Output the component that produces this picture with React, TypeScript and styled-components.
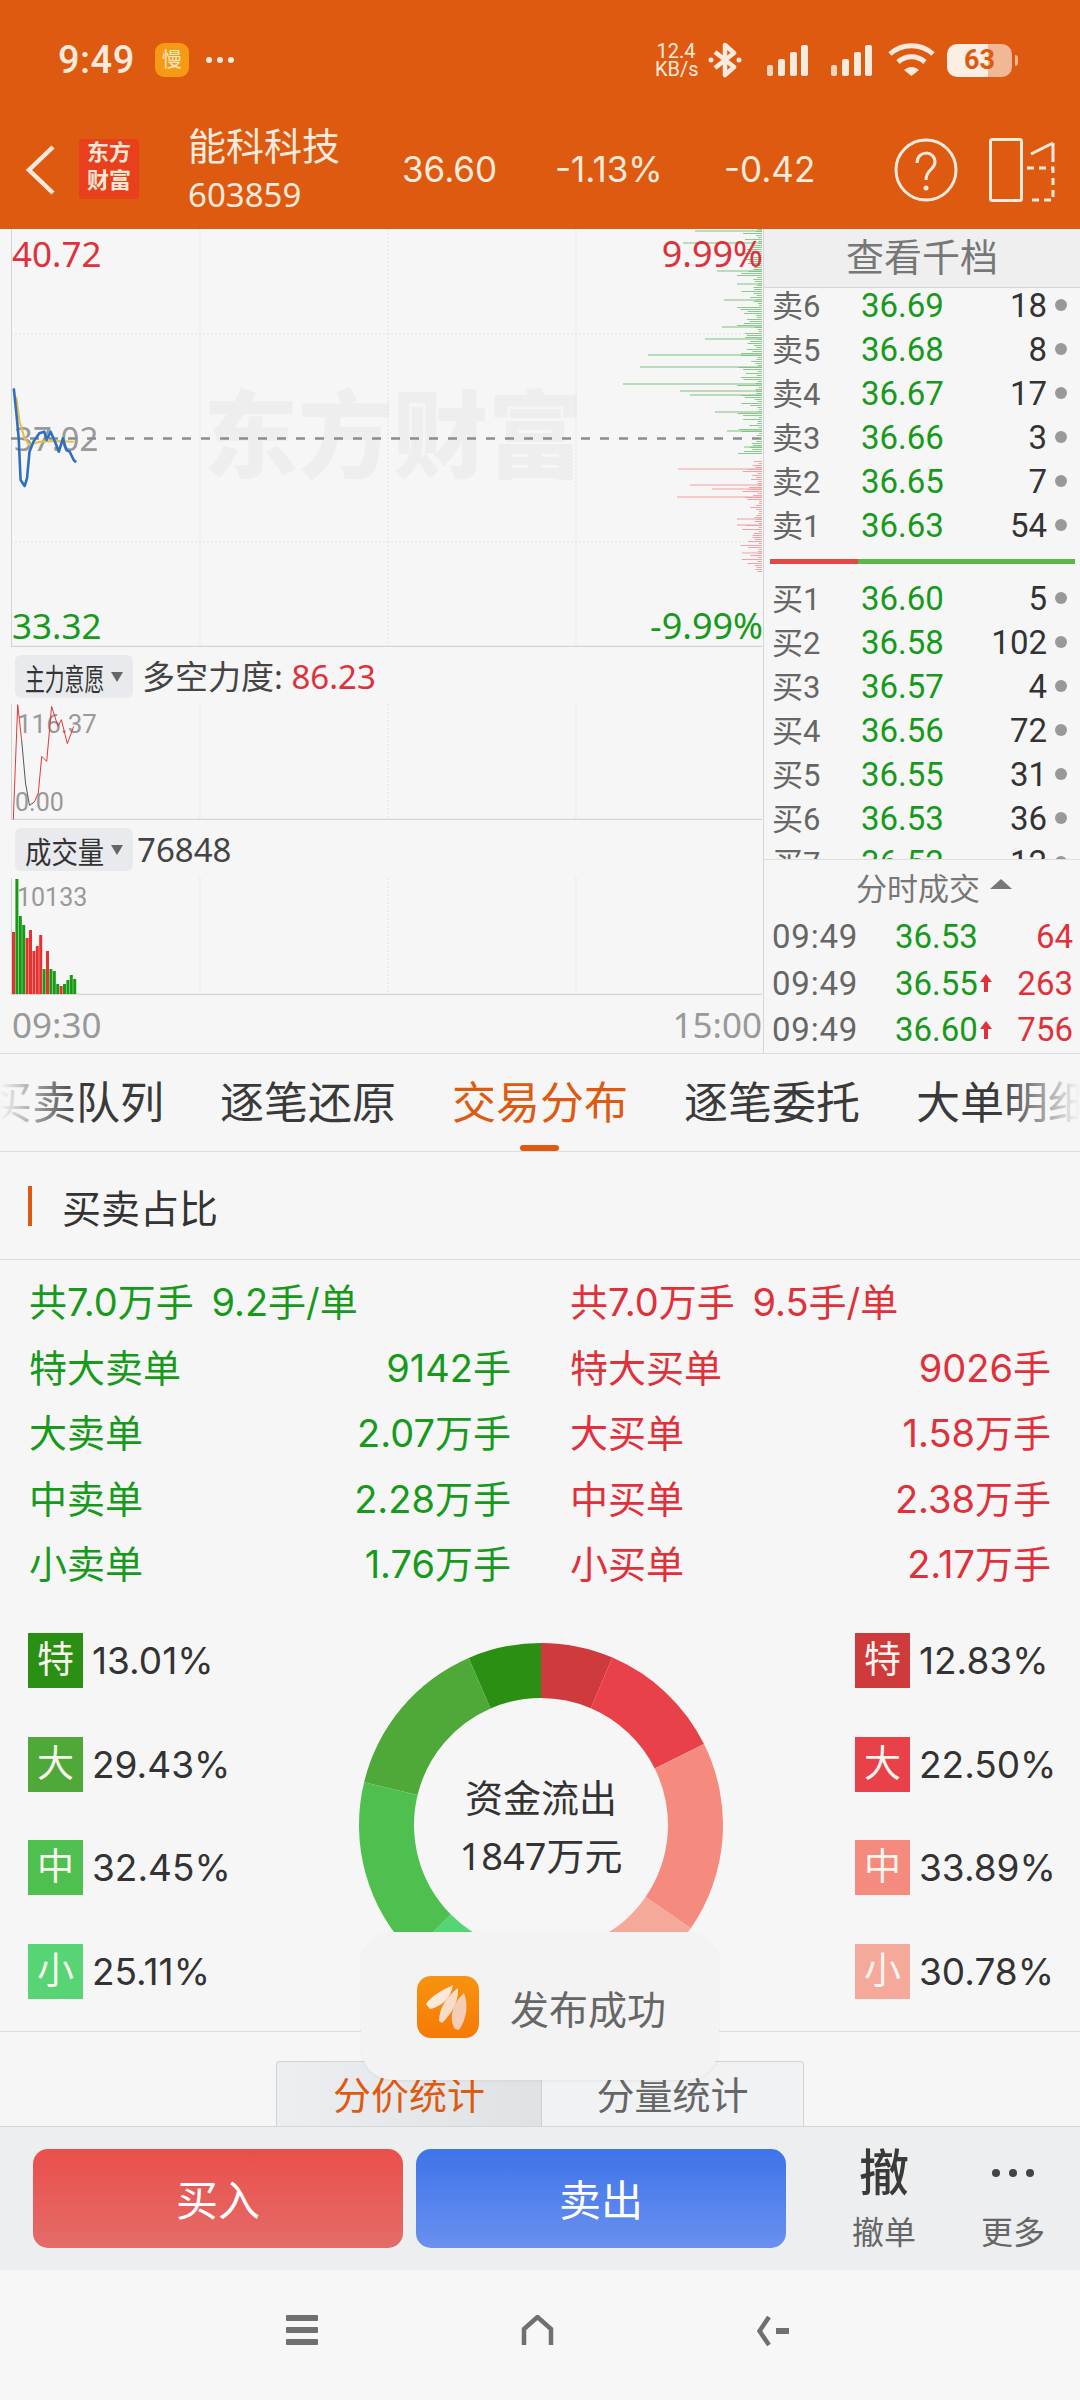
import React from 'react';
import styled, { createGlobalStyle } from 'styled-components';

const ORANGE = '#de5a10';
const HEAD_TEXT = '#f8ebdd';
const UP = '#e0303a';
const DOWN = '#179a1c';
const NOTO = '"Noto Sans", "Noto Sans CJK SC", sans-serif';
const INTER = 'Inter, "Noto Sans CJK SC", sans-serif';

const GlobalStyle = createGlobalStyle`
    html, body {
        margin: 0;
        padding: 0;
        background: #f6f6f6;
    }
    * {
        box-sizing: border-box;
    }
`;

const Page = styled.div`
    position: relative;
    width: 1080px;
    height: 2400px;
    overflow: hidden;
    display: flex;
    flex-direction: column;
    background: #f6f6f6;
    font-family: Roboto, "Noto Sans CJK SC", sans-serif;
    color: #333;
`;

/* ---------- orange header ---------- */

const Header = styled.header`
    height: 229px;
    flex: none;
    background: ${ORANGE};
    color: ${HEAD_TEXT};
`;

const StatusBar = styled.div`
    height: 110px;
    padding: 26px 68px 0 58px;
    display: flex;
    align-items: flex-start;
`;

const Clock = styled.span`
    font-size: 38px;
    line-height: 68px;
    font-weight: 500;
    letter-spacing: 0.5px;
`;

const SlowBadge = styled.span`
    width: 34px;
    height: 34px;
    margin: 17px 0 0 20px;
    border-radius: 9px;
    background: #f59a12;
    color: #fde7c8;
    font-size: 20px;
    line-height: 34px;
    text-align: center;
`;

const StatusDots = styled.span`
    display: flex;
    gap: 5px;
    margin: 31px 0 0 17px;
    i {
        width: 6px;
        height: 6px;
        border-radius: 50%;
        background: ${HEAD_TEXT};
    }
`;

const StatusRight = styled.div`
    margin-left: auto;
    margin-top: 17px;
    display: flex;
    align-items: center;
    height: 34px;
`;

const NetSpeed = styled.span`
    width: 42px;
    font-size: 20px;
    line-height: 18px;
    text-align: center;
    margin-right: 11px;
`;

const Battery = styled.span`
    position: relative;
    width: 65px;
    height: 33px;
    margin-left: 12px;
    border-radius: 10px;
    background: linear-gradient(90deg, #fbeee3 0 63%, #f0b895 63% 100%);
    color: ${ORANGE};
    font-size: 27px;
    font-weight: 700;
    line-height: 33px;
    text-align: center;
    &::after {
        content: '';
        position: absolute;
        right: -6px;
        top: 11px;
        width: 3px;
        height: 11px;
        border-radius: 0 3px 3px 0;
        background: #f0b895;
    }
`;

const NavBar = styled.div`
    height: 119px;
    padding-left: 25px;
    display: flex;
    align-items: center;
`;

const LogoTile = styled.div`
    width: 60px;
    height: 60px;
    margin: -2px 0 0 24px;
    border-radius: 3px;
    background: #e8401c;
    color: #fbe6d6;
    font-size: 22px;
    font-weight: 700;
    line-height: 28px;
    text-align: center;
`;

const StockName = styled.div`
    width: 214px;
    margin-left: 49px;
    b {
        display: block;
        font-size: 38px;
        font-weight: 400;
        line-height: 50px;
    }
    span {
        display: block;
        font-family: ${NOTO};
        font-size: 33px;
        line-height: 46px;
    }
`;

const Quote = styled.span<{ $width: number }>`
    width: ${(p) => p.$width}px;
    font-family: ${INTER};
    font-size: 35px;
    margin-top: -1px;
`;

const NavIcons = styled.div`
    margin-left: auto;
    padding-right: 25px;
    display: flex;
    align-items: center;
    gap: 31px;
`;

/* ---------- chart area ---------- */

const ChartRow = styled.section`
    height: 825px;
    flex: none;
    display: flex;
    border-bottom: 1px solid #dcdcdc;
`;

const Charts = styled.div`
    width: 763px;
    flex: none;
    padding-left: 11px;
    display: flex;
    flex-direction: column;
`;

const ChartBox = styled.div<{ $height: number }>`
    position: relative;
    height: ${(p) => p.$height}px;
    flex: none;
    svg {
        position: relative;
        display: block;
    }
`;

const AxisLabel = styled.span<{ $color: string; $size: number; $top: number; $right?: boolean; $left?: number }>`
    position: absolute;
    top: ${(p) => p.$top}px;
    ${(p) => (p.$right ? 'right: 0;' : `left: ${p.$left ?? 1}px;`)}
    color: ${(p) => p.$color};
    font-family: ${NOTO};
    font-size: ${(p) => p.$size}px;
    line-height: 40px;
`;

const SmallLabel = styled(AxisLabel)`
    font-family: Roboto, sans-serif;
`;

const Watermark = styled.span`
    position: absolute;
    left: 192px;
    top: 155px;
    font-size: 95px;
    line-height: 110px;
    font-weight: 900;
    color: #eeeeee;
    white-space: nowrap;
`;

const IndicatorBar = styled.div<{ $height: number }>`
    height: ${(p) => p.$height}px;
    flex: none;
    padding: 8px 0 0 4px;
    display: flex;
    align-items: flex-start;
    font-family: ${NOTO};
    font-size: 33px;
    color: #444;
`;

const IndicatorPill = styled.span<{ $gap: number }>`
    width: 118px;
    height: 43px;
    padding-left: 10px;
    margin-right: ${(p) => p.$gap}px;
    display: flex;
    align-items: center;
    justify-content: space-between;
    background: #e9eaed;
    border-radius: 6px;
    color: #333;
`;

const PillLabel = styled.span<{ $scale: number }>`
    display: block;
    width: 79px;
    flex: none;
    font-size: 30px;
    white-space: nowrap;
    transform: scaleX(${(p) => p.$scale});
    transform-origin: left center;
`;

const PillArrow = styled.i`
    width: 0;
    height: 0;
    margin: 0 10px 0 0;
    border: 6px solid transparent;
    border-top: 10px solid #666;
    border-bottom: 0;
`;

const IndicatorText = styled.span`
    line-height: 43px;
    white-space: nowrap;
    em {
        font-style: normal;
        color: ${UP};
    }
`;

const TimeAxis = styled.div`
    flex: 1;
    display: flex;
    align-items: center;
    justify-content: space-between;
    padding: 0 1px;
    font-family: ${NOTO};
    font-size: 35px;
    color: #999;
`;

const SidePanel = styled.aside`
    flex: 1;
    min-width: 0;
    border-left: 1px solid #d6d6d6;
    display: flex;
    flex-direction: column;
`;

const DepthHeader = styled.div`
    height: 59px;
    flex: none;
    background: #efefef;
    border-bottom: 1px solid #d4d4d4;
    font-size: 38px;
    line-height: 58px;
    text-align: center;
    color: #777;
`;

const DepthList = styled.div`
    height: 572px;
    flex: none;
    overflow: hidden;
    border-bottom: 1px solid #dedede;
`;

const DepthScroll = styled.div`
    margin-top: -5px;
`;

const DepthLine = styled.div`
    height: 44px;
    padding: 0 13px 0 8px;
    display: flex;
    align-items: center;
    font-size: 33px;
`;

const DepthLabel = styled.span`
    width: 89px;
    flex: none;
    margin-top: -3px;
    color: #666;
    font-size: 31px;
    white-space: nowrap;
`;

const DepthPrice = styled.span`
    width: 90px;
    flex: none;
    color: ${DOWN};
`;

const DepthVolume = styled.span`
    flex: 1;
    text-align: right;
    color: #333;
`;

const DepthDot = styled.i`
    width: 12px;
    height: 12px;
    margin-left: 8px;
    flex: none;
    border-radius: 50%;
    background: #999;
`;

const RatioBarWrap = styled.div`
    height: 29px;
    padding: 0 5px 0 6px;
    display: flex;
    align-items: center;
`;

const RatioBar = styled.div`
    width: 100%;
    height: 5px;
    background: linear-gradient(90deg, #e2474a 0 29%, #5cb648 29% 100%);
`;

const TradeHeader = styled.div`
    height: 53px;
    flex: none;
    display: flex;
    align-items: center;
    justify-content: center;
    gap: 10px;
    padding-left: 24px;
    font-size: 31px;
    color: #777;
`;

const TradeCaret = styled.i`
    width: 0;
    height: 0;
    margin-top: -6px;
    border: 11px solid transparent;
    border-bottom: 10px solid #777;
    border-top: 0;
`;

const TradeLine = styled.div`
    height: 47px;
    padding: 0 7px 0 8px;
    display: flex;
    align-items: center;
    font-size: 33px;
`;

const TradeTime = styled.span`
    width: 123px;
    flex: none;
    color: #666;
    letter-spacing: 0.8px;
`;

const TradePrice = styled.span`
    width: 108px;
    flex: none;
    color: ${DOWN};
    display: flex;
    align-items: center;
    gap: 1px;
    white-space: nowrap;
`;

const TradeVolume = styled.span`
    flex: 1;
    text-align: right;
    color: ${UP};
`;

/* ---------- tabs ---------- */

const TabStrip = styled.nav`
    position: relative;
    height: 98px;
    flex: none;
    overflow: hidden;
    border-bottom: 1px solid #dcdcdc;
    display: flex;
    gap: 60px;
`;

const Tab = styled.span<{ $active?: boolean; $first?: boolean }>`
    position: relative;
    flex: none;
    width: 172px;
    margin-left: ${(p) => (p.$first ? '-12px' : '0')};
    font-size: 44px;
    line-height: 101px;
    white-space: nowrap;
    color: ${(p) => (p.$active ? ORANGE : '#3a3a3a')};
    &::after {
        content: ${(p) => (p.$active ? "''" : 'none')};
        position: absolute;
        left: 68px;
        bottom: 0;
        width: 39px;
        height: 6px;
        border-radius: 3px;
        background: ${ORANGE};
    }
`;

const TabFade = styled.i<{ $side: 'left' | 'right' }>`
    position: absolute;
    top: 0;
    bottom: 0;
    width: 80px;
    ${(p) => p.$side}: 0;
    background: linear-gradient(to ${(p) => p.$side}, rgba(246, 246, 246, 0), #f6f6f6);
`;

const SectionTitle = styled.h2`
    height: 108px;
    flex: none;
    margin: 0;
    display: flex;
    align-items: center;
    padding-left: 28px;
    border-bottom: 1px solid #dcdcdc;
    font-size: 39px;
    font-weight: 400;
    color: #333;
    &::before {
        content: '';
        width: 4px;
        height: 40px;
        margin-right: 30px;
        background: ${ORANGE};
    }
`;

/* ---------- buy / sell summary ---------- */

const Summary = styled.section`
    height: 337px;
    flex: none;
    padding: 7px 29px 0 29px;
    display: grid;
    grid-template-columns: 482px 481px;
    column-gap: 59px;
`;

const SummaryColumn = styled.div<{ $color: string }>`
    color: ${(p) => p.$color};
    font-family: ${INTER};
    font-size: 38px;
    word-spacing: 7px;
`;

const SummaryLine = styled.div`
    height: 65.5px;
    display: flex;
    align-items: center;
    justify-content: space-between;
    white-space: nowrap;
`;

const RatioBlock = styled.section`
    height: 435px;
    flex: none;
    padding-top: 36px;
    border-bottom: 1px solid #dcdcdc;
    display: grid;
    grid-template-columns: 359px 364px 1fr;
`;

const Legend = styled.div<{ $left: number }>`
    padding-left: ${(p) => p.$left}px;
    display: flex;
    flex-direction: column;
    gap: 48.5px;
`;

const LegendItem = styled.div`
    height: 55px;
    display: flex;
    align-items: center;
    gap: 9px;
    font-family: ${INTER};
    font-size: 37px;
    color: #333;
    white-space: nowrap;
`;

const LegendTag = styled.span<{ $bg: string }>`
    width: 55px;
    height: 55px;
    background: ${(p) => p.$bg};
    color: #f8f4ee;
    font-size: 37px;
    line-height: 54px;
    text-align: center;
`;

const Donut = styled.div`
    position: relative;
    height: 364px;
    margin-top: 10px;
`;

const DonutCaption = styled.div`
    position: absolute;
    left: 0;
    right: 0;
    top: 125px;
    text-align: center;
    font-family: ${NOTO};
    font-size: 38px;
    line-height: 58px;
    color: #333;
`;

const Segments = styled.div`
    height: 94px;
    flex: none;
    padding-top: 29px;
    display: flex;
    justify-content: center;
`;

const Segment = styled.span<{ $active?: boolean }>`
    width: ${(p) => (p.$active ? 265 : 263)}px;
    height: 65px;
    border: 1px solid #cfd2d6;
    border-bottom: 0;
    border-radius: ${(p) => (p.$active ? '4px 0 0 0' : '0 4px 0 0')};
    ${(p) => (p.$active ? 'border-right: 0;' : '')}
    background: ${(p) => (p.$active ? 'linear-gradient(90deg, #eceef1, #dfe2e5)' : '#f1f2f3')};
    color: ${(p) => (p.$active ? ORANGE : '#666')};
    font-size: 38px;
    line-height: 68px;
    text-align: center;
`;

/* ---------- trade bar and navigation ---------- */

const TradeBar = styled.footer`
    height: 144px;
    flex: none;
    padding: 22px 0 0 33px;
    display: flex;
    align-items: flex-start;
    border-top: 1px solid #d4d6d9;
    background: #eceef0;
`;

const OrderButton = styled.button<{ $from: string; $to: string }>`
    width: 370px;
    height: 99px;
    margin-right: 13px;
    padding: 0 0 2px;
    border: none;
    border-radius: 15px;
    outline: none;
    background: linear-gradient(${(p) => p.$from}, ${(p) => p.$to});
    color: #fff;
    font-family: inherit;
    font-size: 42px;
    cursor: pointer;
`;

const BarAction = styled.div<{ $width: number; $left: number }>`
    width: ${(p) => p.$width}px;
    margin-left: ${(p) => p.$left}px;
    text-align: center;
    color: #666;
    font-size: 32px;
    b {
        display: block;
        height: 62px;
        color: #3a3a3a;
        font-size: 50px;
        font-weight: 500;
        line-height: 50px;
    }
    span {
        display: block;
        line-height: 44px;
        white-space: nowrap;
    }
`;

const MoreDots = styled.i`
    display: flex;
    height: 62px;
    align-items: center;
    justify-content: center;
    gap: 9px;
    padding-bottom: 14px;
    i {
        width: 8px;
        height: 8px;
        border-radius: 50%;
        background: #444;
    }
`;

const SystemNav = styled.div`
    flex: 1;
    padding: 45px 0 0 286px;
    display: flex;
    align-items: flex-start;
    gap: 203px;
    background: #f7f7f7;
`;

/* ---------- floating notice ---------- */

const Toast = styled.div`
    position: absolute;
    left: 361px;
    top: 1932px;
    width: 358px;
    height: 148px;
    padding: 2px 0 0 56px;
    display: flex;
    align-items: center;
    gap: 31px;
    border-radius: 32px;
    background: #f3f3f3;
    box-shadow: 0 1px 3px rgba(0, 0, 0, 0.06);
    color: #666;
    font-size: 39px;
`;

/* ---------- chart data ---------- */

const GRID_X = [189, 377, 565];

const GridLines = ({ rows, height }: { rows: number[]; height: number }) => (
    <g fill="none" strokeWidth="1">
        {GRID_X.map((x) => <line key={x} x1={x} x2={x} y1={0} y2={height} stroke="#e3e3e3" strokeDasharray="2 2" />)}
        {rows.map((y) => <line key={y} x1={0} x2={751} y1={y} y2={y} stroke="#e3e3e3" strokeDasharray="2 2" />)}
        <line x1={0.5} x2={0.5} y1={0} y2={height} stroke="#d4d4d4" />
        <line x1={0} x2={751} y1={height - 0.5} y2={height - 0.5} stroke="#d4d4d4" strokeWidth="1.5" />
    </g>
);

const toPoints = (pts: number[][], ox: number, oy: number) =>
    pts.map(([x, y]) => `${(x / 2.036 - ox).toFixed(1)},${(y / 3 + oy).toFixed(1)}`).join(' ');

const BLUE_LINE = [[28, 490], [33, 560], [38, 640], [42, 765], [50, 783], [55, 760], [60, 680], [68, 650], [80, 625], [90, 620], [95, 645], [103, 620], [112, 650], [120, 680], [128, 640], [135, 675], [142, 680], [150, 705], [155, 712]];
const YELLOW_LINE = [[33, 515], [40, 590], [50, 640], [60, 660], [80, 650], [110, 648], [150, 650]];

// long order-book bars on the right edge, given as [y, left x] on the chart
const LONG_ASK = [[2, 684], [14, 672], [42, 706], [55, 726], [71, 713], [98, 711], [110, 694], [126, 637], [138, 629], [155, 612], [162, 669], [166, 679], [183, 704], [202, 716], [218, 733]];
const LONG_BID = [[240, 667], [256, 679], [260, 701], [268, 666], [290, 726], [296, 726], [324, 731]];

const noise = (count: number, seed: number) => {
    let s = seed;
    return Array.from({ length: count }, () => {
        s = (s * 16807) % 2147483647;
        return s % 1000 / 1000;
    });
};

const ShortBars = ({ from, to, color, reach }: { from: number; to: number; color: string; reach: number }) => {
    const rows = Math.floor((to - from) / 2);
    const values = noise(rows, from + 97);
    return (
        <g stroke={color} strokeWidth="1">
            {values.map((v, i) => (
                <line key={i} x1={751 - 3 - v * v * reach} x2={751} y1={from + i * 2 + 0.5} y2={from + i * 2 + 0.5} />
            ))}
        </g>
    );
};

const PriceChart = () => (
    <ChartBox $height={418}>
        <Watermark>东方财富</Watermark>
        <AxisLabel $color={UP} $size={35} $top={5} $left={1}>40.72</AxisLabel>
        <AxisLabel $color={DOWN} $size={35} $top={377} $left={1}>33.32</AxisLabel>
        <AxisLabel $color="#999" $size={33} $top={190} $left={3}>37.02</AxisLabel>
        <svg width="751" height="418">
            <GridLines rows={[105, 313]} height={418} />
            <line x1={0} x2={751} y1={209.5} y2={209.5} stroke="#8c8c8c" strokeWidth="2.4" strokeDasharray="9 10" />
            <ShortBars from={0} to={226} color="#8ac98b" reach={22} />
            <ShortBars from={232} to={345} color="#f0a3a3" reach={20} />
            {LONG_ASK.map(([y, x]) => <line key={y} x1={x} x2={751} y1={y} y2={y} stroke="#7cc27e" strokeWidth="1" />)}
            {LONG_BID.map(([y, x]) => <line key={y} x1={x} x2={751} y1={y} y2={y} stroke="#f0a0a0" strokeWidth="1" />)}
            <polyline points={toPoints(YELLOW_LINE, 11, -4)} fill="none" stroke="#e8bd4c" strokeWidth="2" />
            <polyline points={toPoints(BLUE_LINE, 11, -4)} fill="none" stroke="#2f6fc0" strokeWidth="2.6" strokeLinejoin="round" />
        </svg>
        <AxisLabel $color={UP} $size={36} $top={5} $right>9.99%</AxisLabel>
        <AxisLabel $color={DOWN} $size={36} $top={377} $right>-9.99%</AxisLabel>
    </ChartBox>
);

const FORCE_RED = [[27, 540], [36, 195], [44, 300]];
const FORCE_BLACK = [[44, 300], [52, 430], [60, 497], [70, 487]];
const FORCE_RED_2 = [[70, 487], [78, 460], [85, 350], [95, 365], [105, 200], [118, 260], [125, 240], [137, 312], [150, 260]];

const ForceChart = () => (
    <ChartBox $height={116}>
        <SmallLabel $color="#999" $size={26} $top={0} $left={6}>116.37</SmallLabel>
        <SmallLabel $color="#999" $size={25} $top={79} $left={4}>0.00</SmallLabel>
        <svg width="751" height="116">
            <GridLines rows={[]} height={116} />
            <polyline points={toPoints(FORCE_RED, 11, -64.3)} fill="none" stroke="#e23a3a" strokeWidth="1" />
            <polyline points={toPoints(FORCE_BLACK, 11, -64.3)} fill="none" stroke="#555" strokeWidth="1" />
            <polyline points={toPoints(FORCE_RED_2, 11, -64.3)} fill="none" stroke="#e23a3a" strokeWidth="1" />
        </svg>
    </ChartBox>
);

// [bar height, is red]
const VOLUME_BARS: [number, boolean][] = [
    [62, true], [115, false], [78, false], [69, false], [56, true], [64, true], [43, true], [48, true], [59, true],
    [25, false], [43, true], [25, false], [23, false], [10, false], [8, true], [10, false], [14, false], [19, false], [15, false],
];

const VolumeChart = () => (
    <ChartBox $height={117}>
        <SmallLabel $color="#999" $size={25} $top={0} $left={6}>10133</SmallLabel>
        <svg width="751" height="117">
            <GridLines rows={[]} height={117} />
            {VOLUME_BARS.map(([h, red], i) => (
                <rect key={i} x={1 + i * 3.4} y={116 - h} width={3} height={h} fill={red ? '#e8302e' : '#159a14'} />
            ))}
        </svg>
    </ChartBox>
);

const ASKS = [
    ['卖6', '36.69', '18'], ['卖5', '36.68', '8'], ['卖4', '36.67', '17'],
    ['卖3', '36.66', '3'], ['卖2', '36.65', '7'], ['卖1', '36.63', '54'],
];
const BIDS = [
    ['买1', '36.60', '5'], ['买2', '36.58', '102'], ['买3', '36.57', '4'], ['买4', '36.56', '72'],
    ['买5', '36.55', '31'], ['买6', '36.53', '36'], ['买7', '36.52', '12'],
];
const TRADES = [
    { price: '36.53', volume: '64', rising: false },
    { price: '36.55', volume: '263', rising: true },
    { price: '36.60', volume: '756', rising: true },
];

const DepthRow = ({ row }: { row: string[] }) => (
    <DepthLine>
        <DepthLabel>{row[0]}</DepthLabel>
        <DepthPrice>{row[1]}</DepthPrice>
        <DepthVolume>{row[2]}</DepthVolume>
        <DepthDot />
    </DepthLine>
);

const UpArrow = () => (
    <svg width="14" height="20" viewBox="0 0 14 20">
        <path d="M7 1 L13 9 H9 V19 H5 V9 H1 Z" fill={UP} />
    </svg>
);

/* ---------- ratio donut ---------- */

const CX = 182;
const CY = 182;

const arcPath = (from: number, to: number, r1: number, r2: number) => {
    const pt = (a: number, r: number) => {
        const t = (a * Math.PI) / 180;
        return `${(CX + r * Math.sin(t)).toFixed(2)} ${(CY - r * Math.cos(t)).toFixed(2)}`;
    };
    const sweep = to > from ? 1 : 0;
    return `M${pt(from, r2)} A${r2} ${r2} 0 0 ${sweep} ${pt(to, r2)} L${pt(to, r1)} A${r1} ${r1} 0 0 ${1 - sweep} ${pt(from, r1)} Z`;
};

const SELL_SHARE = [
    { tag: '特', pct: 13.01, color: '#2a8f12' },
    { tag: '大', pct: 29.43, color: '#4fa938' },
    { tag: '中', pct: 32.45, color: '#4fbf4f' },
    { tag: '小', pct: 25.11, color: '#57d474' },
];
const BUY_SHARE = [
    { tag: '特', pct: 12.83, color: '#cf3a3c' },
    { tag: '大', pct: 22.5, color: '#e8414a' },
    { tag: '中', pct: 33.89, color: '#f58a7e' },
    { tag: '小', pct: 30.78, color: '#f4a99b' },
];

const arcsFor = (shares: typeof BUY_SHARE, dir: number) => {
    let angle = 0;
    return shares.map((s) => {
        const next = angle + (s.pct / 100) * 180;
        const d = arcPath(dir * angle, dir * next, 127, 182);
        angle = next;
        return <path key={s.tag} d={d} fill={s.color} />;
    });
};

const SUMMARY_SELL = [
    ['特大卖单', '9142手'], ['大卖单', '2.07万手'], ['中卖单', '2.28万手'], ['小卖单', '1.76万手'],
];
const SUMMARY_BUY = [
    ['特大买单', '9026手'], ['大买单', '1.58万手'], ['中买单', '2.38万手'], ['小买单', '2.17万手'],
];

/* ---------- small header drawings ---------- */

const BluetoothIcon = () => (
    <svg width="34" height="36" viewBox="0 0 34 36" fill="none" stroke={HEAD_TEXT} strokeWidth="4.5" strokeLinejoin="round">
        <path d="M7 10 L26 25 L17 33 V3 L26 11 L7 26" />
        <circle cx="3" cy="18" r="2.5" fill={HEAD_TEXT} stroke="none" />
        <circle cx="31" cy="18" r="2.5" fill={HEAD_TEXT} stroke="none" />
    </svg>
);

const SignalIcon = ({ left }: { left: number }) => (
    <svg width="41" height="31" viewBox="0 0 41 31" style={{ marginLeft: left }} fill={HEAD_TEXT}>
        <rect x="0" y="20" width="6" height="11" rx="2" opacity="0.85" />
        <rect x="11" y="14" width="7" height="17" rx="2" />
        <rect x="23" y="7" width="7" height="24" rx="2" />
        <rect x="34" y="0" width="7" height="31" rx="2" />
    </svg>
);

const WifiIcon = () => (
    <svg width="47" height="34" viewBox="0 0 47 34" style={{ marginLeft: 16 }} fill="none" stroke={HEAD_TEXT} strokeWidth="5">
        <path d="M2 11 C14 0 33 0 45 11" />
        <path d="M10 19 C18 12 29 12 37 19" />
        <path d="M16 27 L23.5 33 L31 27 C26 23 21 23 16 27 Z" fill={HEAD_TEXT} stroke="none" />
    </svg>
);

const BackIcon = () => (
    <svg width="30" height="50" viewBox="0 0 30 50" fill="none" stroke={HEAD_TEXT} strokeWidth="4.5">
        <path d="M28 2 L4 25 L28 48" />
    </svg>
);

const HelpIcon = () => (
    <svg width="64" height="64" viewBox="0 0 64 64" fill="none" stroke={HEAD_TEXT} strokeWidth="3">
        <circle cx="32" cy="32" r="30" />
        <path d="M23 25 C23 12 41 12 41 24 C41 32 32 31 32 42" />
        <circle cx="32" cy="50" r="2.5" fill={HEAD_TEXT} stroke="none" />
    </svg>
);

const SplitIcon = () => (
    <svg width="66" height="64" viewBox="0 0 66 64" fill="none" stroke={HEAD_TEXT} strokeWidth="3">
        <rect x="1.5" y="1.5" width="31" height="61" rx="2" />
        <path d="M42 16 L64 5 M64 5 V24" />
        <path d="M38 30 H64 V62 H38" strokeDasharray="7 5" />
    </svg>
);

const MenuIcon = () => (
    <svg width="32" height="30" viewBox="0 0 32 30" fill="#707070">
        <rect x="0" y="0" width="32" height="6" rx="1" />
        <rect x="0" y="12" width="32" height="6" rx="1" />
        <rect x="0" y="24" width="32" height="6" rx="1" />
    </svg>
);

const HomeIcon = () => (
    <svg width="33" height="30" viewBox="0 0 33 30" fill="none" stroke="#707070" strokeWidth="4.5">
        <path d="M3 30 V14 L16.5 2 L30 14 V30" />
    </svg>
);

const ReturnIcon = () => (
    <svg width="33" height="32" viewBox="0 0 33 32" fill="none" stroke="#707070" strokeWidth="4.5">
        <path d="M12 2 L2.5 16 L12 30" />
        <path d="M19 16 H32" strokeWidth="6" />
    </svg>
);

const AppIcon = () => (
    <svg width="62" height="62" viewBox="0 0 62 62">
        <defs>
            <linearGradient id="appTile" x1="0" y1="0" x2="0" y2="1">
                <stop offset="0" stopColor="#f7930e" />
                <stop offset="1" stopColor="#f67a06" />
            </linearGradient>
        </defs>
        <rect width="62" height="62" rx="14" fill="url(#appTile)" />
        <path d="M9 28 C15 19 26 14 36 9 C34 22 24 31 13 33 Z" fill="#fbe9da" />
        <path d="M22 45 C22 32 30 20 41 12 C42 26 35 37 25 47 Z" fill="#f8dcc8" />
        <path d="M38 53 C31 42 36 27 47 17 C52 30 49 44 42 54 Z" fill="#f5cdb5" />
    </svg>
);

const App = () => (
    <Page>
        <GlobalStyle />
        <Header>
            <StatusBar>
                <Clock>9:49</Clock>
                <SlowBadge>慢</SlowBadge>
                <StatusDots><i /><i /><i /></StatusDots>
                <StatusRight>
                    <NetSpeed>12.4<br />KB/s</NetSpeed>
                    <BluetoothIcon />
                    <SignalIcon left={25} />
                    <SignalIcon left={23} />
                    <WifiIcon />
                    <Battery>63</Battery>
                </StatusRight>
            </StatusBar>
            <NavBar>
                <BackIcon />
                <LogoTile>东方<br />财富</LogoTile>
                <StockName>
                    <b>能科科技</b>
                    <span>603859</span>
                </StockName>
                <Quote $width={153}>36.60</Quote>
                <Quote $width={169}>-1.13%</Quote>
                <Quote $width={130}>-0.42</Quote>
                <NavIcons>
                    <HelpIcon />
                    <SplitIcon />
                </NavIcons>
            </NavBar>
        </Header>

        <ChartRow>
            <Charts>
                <PriceChart />
                <IndicatorBar $height={57}>
                    <IndicatorPill $gap={9}><PillLabel $scale={0.66}>主力意愿</PillLabel><PillArrow /></IndicatorPill>
                    <IndicatorText>多空力度: <em>86.23</em></IndicatorText>
                </IndicatorBar>
                <ForceChart />
                <IndicatorBar $height={58}>
                    <IndicatorPill $gap={4}><PillLabel $scale={0.88}>成交量</PillLabel><PillArrow /></IndicatorPill>
                    <IndicatorText>76848</IndicatorText>
                </IndicatorBar>
                <VolumeChart />
                <TimeAxis>
                    <span>09:30</span>
                    <span>15:00</span>
                </TimeAxis>
            </Charts>
            <SidePanel>
                <DepthHeader>查看千档</DepthHeader>
                <DepthList>
                    <DepthScroll>
                        {ASKS.map((row) => <DepthRow key={row[0]} row={row} />)}
                        <RatioBarWrap><RatioBar /></RatioBarWrap>
                        {BIDS.map((row) => <DepthRow key={row[0]} row={row} />)}
                    </DepthScroll>
                </DepthList>
                <TradeHeader>分时成交<TradeCaret /></TradeHeader>
                {TRADES.map((t) => (
                    <TradeLine key={t.price}>
                        <TradeTime>09:49</TradeTime>
                        <TradePrice>{t.price}{t.rising && <UpArrow />}</TradePrice>
                        <TradeVolume>{t.volume}</TradeVolume>
                    </TradeLine>
                ))}
            </SidePanel>
        </ChartRow>

        <TabStrip>
            <Tab $first>买卖队列</Tab>
            <Tab>逐笔还原</Tab>
            <Tab $active>交易分布</Tab>
            <Tab>逐笔委托</Tab>
            <Tab>大单明细</Tab>
            <TabFade $side="left" />
            <TabFade $side="right" />
        </TabStrip>

        <SectionTitle>买卖占比</SectionTitle>

        <Summary>
            <SummaryColumn $color={DOWN}>
                <SummaryLine><span>共7.0万手 9.2手/单</span></SummaryLine>
                {SUMMARY_SELL.map(([name, value]) => (
                    <SummaryLine key={name}><span>{name}</span><span>{value}</span></SummaryLine>
                ))}
            </SummaryColumn>
            <SummaryColumn $color={UP}>
                <SummaryLine><span>共7.0万手 9.5手/单</span></SummaryLine>
                {SUMMARY_BUY.map(([name, value]) => (
                    <SummaryLine key={name}><span>{name}</span><span>{value}</span></SummaryLine>
                ))}
            </SummaryColumn>
        </Summary>

        <RatioBlock>
            <Legend $left={28}>
                {SELL_SHARE.map((s) => (
                    <LegendItem key={s.tag}>
                        <LegendTag $bg={s.color}>{s.tag}</LegendTag>
                        {s.pct.toFixed(2)}%
                    </LegendItem>
                ))}
            </Legend>
            <Donut>
                <svg width="364" height="364">
                    {arcsFor(SELL_SHARE, -1)}
                    {arcsFor(BUY_SHARE, 1)}
                </svg>
                <DonutCaption>资金流出<br />1847万元</DonutCaption>
            </Donut>
            <Legend $left={132}>
                {BUY_SHARE.map((s) => (
                    <LegendItem key={s.tag}>
                        <LegendTag $bg={s.color}>{s.tag}</LegendTag>
                        {s.pct.toFixed(2)}%
                    </LegendItem>
                ))}
            </Legend>
        </RatioBlock>

        <Segments>
            <Segment $active>分价统计</Segment>
            <Segment>分量统计</Segment>
        </Segments>

        <TradeBar>
            <OrderButton $from="#ea4f4b" $to="#e46c68">买入</OrderButton>
            <OrderButton $from="#3d74e8" $to="#6a90f0">卖出</OrderButton>
            <BarAction $width={70} $left={50}>
                <b>撤</b>
                <span>撤单</span>
            </BarAction>
            <BarAction $width={70} $left={59}>
                <MoreDots><i /><i /><i /></MoreDots>
                <span>更多</span>
            </BarAction>
        </TradeBar>

        <SystemNav>
            <MenuIcon />
            <HomeIcon />
            <ReturnIcon />
        </SystemNav>

        <Toast>
            <AppIcon />
            发布成功
        </Toast>
    </Page>
);

export default App;
